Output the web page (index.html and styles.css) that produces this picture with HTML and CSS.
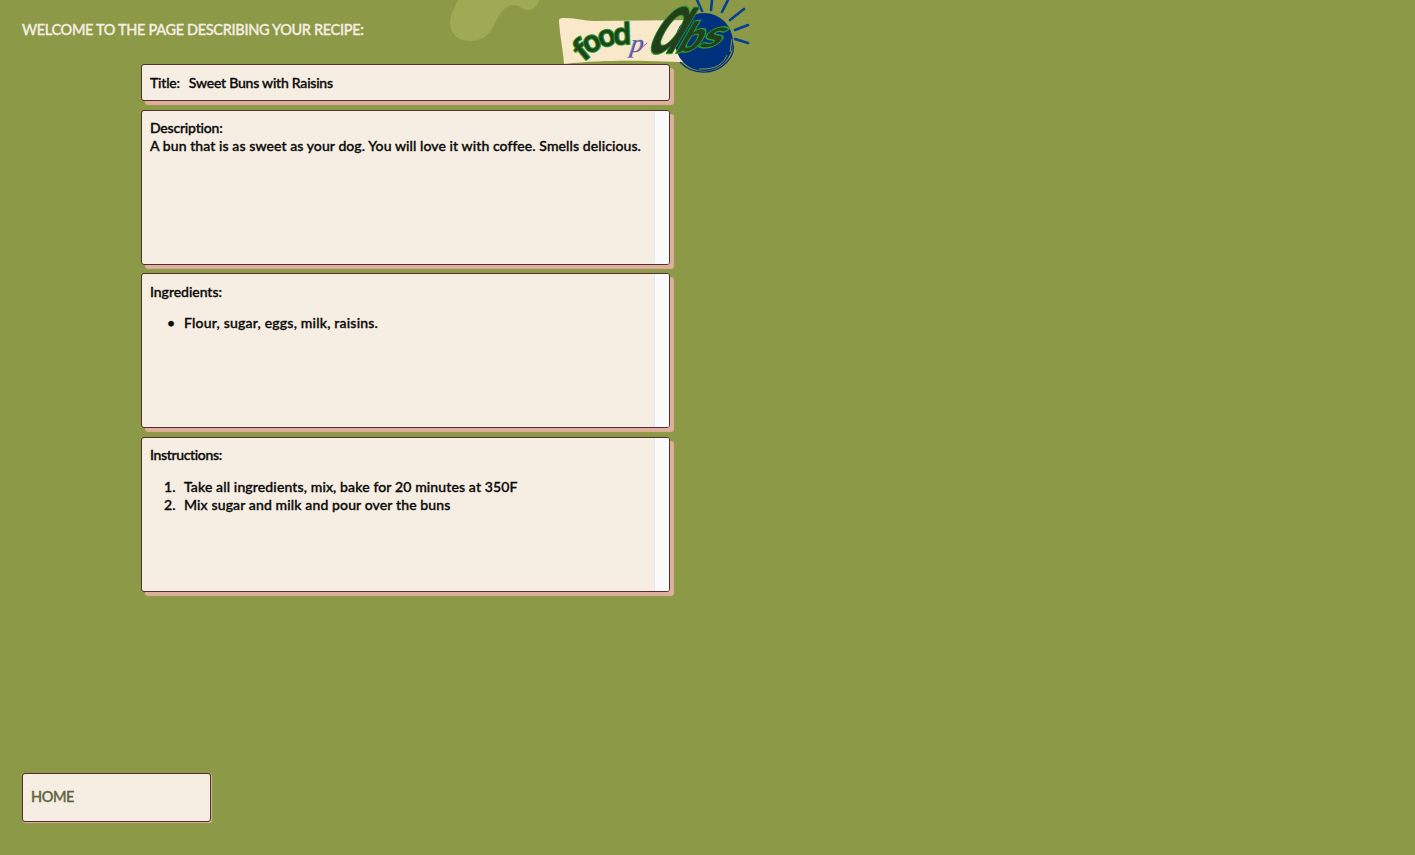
FILE: index.html
```
<!DOCTYPE html>
<html lang="en">
<head>
<meta charset="utf-8">
<title>Recipe</title>
<link rel="stylesheet" href="styles.css">
</head>
<body>
<svg class="backdrop" width="320" height="80" viewBox="450 0 320 80" aria-hidden="true">
  <path class="leaf" d="M458 0C454 8 450 16 450 23C450 34 459 41 470 41C483 41 490 34 495 23C500 13 505 5 513 5C520 5 522 10 528 10C534 10 538 5 539 0Z"/>
  <path class="paper" d="M559 21C559 18 561 18 565 18C577 18 584 21 594 21L695 20L700 62C680 64 630 57 564 64C563 49 560 38 559 21Z"/>
  <circle class="sun" cx="704" cy="42" r="29"/>
  <path class="sun-edge" d="M680 62C692 75 714 76 727 62C733 56 735 49 732 41"/>
  <path class="sun-shine" d="M699 69C716 70 724 63 727 55M730 52L732 39"/>
  <path class="rays" d="M697 0L702 11M712 0L711 10M728 0L722 12M744 9L730 20M748 25L735 30M748 43L735 39"/>
  <g class="food">
    <text transform="translate(583.500 62) rotate(-40) scale(1.150 1)">f</text>
    <text transform="translate(587.500 54.500) rotate(-26)">o</text>
    <text transform="translate(600.500 48) rotate(-16)">o</text>
    <text transform="translate(613.500 44.500) rotate(-2)">d</text>
  </g>
  <text class="p-pink" transform="translate(630 51.500) skewX(-8)">p</text>
  <text class="p-cyan" transform="translate(629 51.500) skewX(-8)">p</text>
  <path class="p-tail" d="M638 51L647 43"/>
  <g class="script">
    <text class="big" transform="translate(645 53) skewX(-24) scale(.72 1)">a</text>
    <text class="small" transform="translate(674 53) rotate(-8) skewX(-38) scale(1.100 1)">b</text>
    <text class="small" transform="translate(697 48) rotate(-6) skewX(-40) scale(1.300 .9)">s</text>
  </g>
</svg>
<main class="page">
  <h1 class="heading">WELCOME TO THE PAGE DESCRIBING YOUR RECIPE:</h1>
  <div class="cards">
    <section class="card title-card"><span class="label">Title:</span><span class="recipe-name">Sweet Buns with Raisins</span></section>
    <section class="card tall"><div class="body"><div class="label">Description:</div><div class="description">A bun that is as sweet as your dog. You will love it with coffee. Smells delicious.</div></div><div class="track"></div></section>
    <section class="card tall"><div class="body lower"><div class="label loose">Ingredients:</div><ul class="list"><li><span class="bullet">•</span><span>Flour, sugar, eggs, milk, raisins.</span></li></ul></div><div class="track"></div></section>
    <section class="card tall"><div class="body"><div class="label tight">Instructions:</div><ol class="list steps"><li><span class="num">1.</span><span>Take all ingredients, mix, bake for 20 minutes at 350F</span></li><li><span class="num">2.</span><span>Mix sugar and milk and pour over the buns</span></li></ol></div><div class="track"></div></section>
  </div>
  <a class="home">HOME</a>
</main>
</body>
</html>
```
FILE: styles.css
```
* { box-sizing: border-box; }
body {
  margin: 0;
  height: 855px;
  overflow: hidden;
  position: relative;
  background: #8c9946;
  color: #0a0908;
  font: 500 14px/18px Lato, "Liberation Sans", sans-serif;
  font-variant-ligatures: none;
  -webkit-text-stroke: .35px;
}
.backdrop { position: absolute; left: 450px; top: 0; }
.leaf { fill: #9fab54; }
.paper { fill: #fae8ca; }
.sun { fill: #00317c; }
.sun-edge { fill: none; stroke: #00317c; stroke-width: 1.3; }
.sun-shine { fill: none; stroke: #8c9946; stroke-width: 1; }
.rays { stroke: #053f98; stroke-width: 2.6; stroke-linecap: round; }
.food text, .script text { -webkit-text-stroke: 0; paint-order: stroke; stroke-linejoin: round; }
.food text { font: 600 29px "Open Sans", sans-serif; fill: #1f451b; stroke: #259331; stroke-width: 2.2px; }
.p-pink, .p-cyan { font: italic 400 26px "Liberation Serif", serif; -webkit-text-stroke: 0; }
.p-pink { fill: #b628bb; }
.p-cyan { fill: #248f9b; opacity: .7; }
.p-tail { stroke: #a34bae; stroke-width: 1; }
.script text { fill: #233f1c; stroke: #299c31; stroke-width: 2.4px; }
.script .big { font: italic 600 84px "Open Sans", "Noto Sans", sans-serif; }
.script .small { font: 700 38px Lato, sans-serif; }

.page { position: relative; display: flex; flex-direction: column; height: 855px; padding: 21px 22px 33px; }
.heading { margin: 0 0 25px; height: 18px; font-size: 14.5px; line-height: 18px; font-weight: 500; letter-spacing: -.33px; color: #f6eee2; white-space: nowrap; }
.cards { display: flex; flex-direction: column; gap: 8.6px; width: 529px; margin-left: 119px; }
.card { display: flex; border: 1px solid #51302f; border-radius: 3px; background: #f6eee2; box-shadow: 4px 4px 1px #deb09b; white-space: nowrap; }
.title-card { height: 37px; padding: 9px 8px; gap: 9px; }
.label { letter-spacing: -.2px; }
.label.loose { letter-spacing: -.04px; }
.label.tight { letter-spacing: -.35px; }
.recipe-name { letter-spacing: -.22px; }
.description { letter-spacing: .09px; }
.tall { height: 155px; overflow: hidden; }
.body { flex: 1; min-width: 0; padding: 8px 8px; }
.body.lower { padding-top: 9px; }
.lower .list { margin-top: 13px; }
.track { width: 15px; background: #fafafa; border-left: 1px solid #e7e7e7; }
.list { list-style: none; margin: 14px 0 0; padding: 0; letter-spacing: .21px; }
.steps { letter-spacing: .13px; }
.list li { display: flex; }
.bullet, .num { width: 34px; flex: none; }
.bullet { padding-left: 17px; }
.num { padding-left: 14px; }
.home { display: flex; align-items: center; width: 189px; height: 49px; margin-top: auto; padding: 0 0 1px 8px; border: 1px solid #51302f; border-radius: 3px; background: #f6eee2; color: #5e6440; font-size: 14.5px; letter-spacing: -.4px; box-shadow: 1px 1px 1px #deb09b; }
```
